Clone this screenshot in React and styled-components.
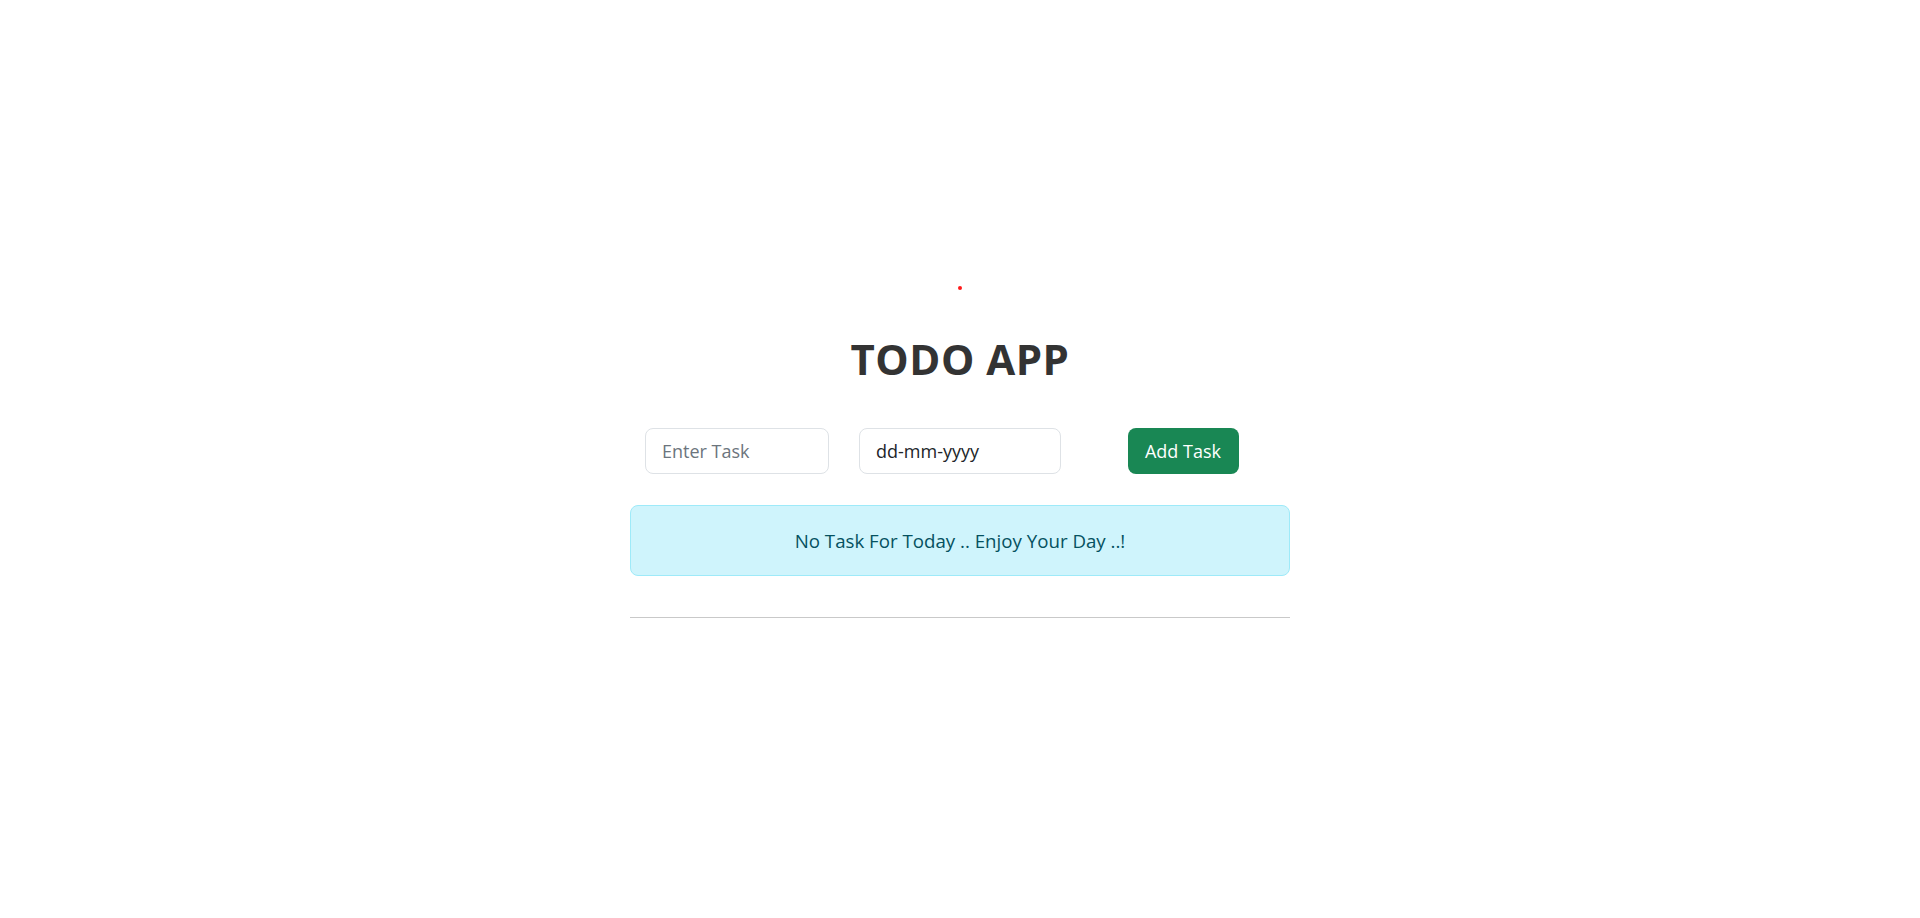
import { useState } from "react";
import styled, { createGlobalStyle } from "styled-components";

const GlobalStyles = createGlobalStyle`
    * {
        box-sizing: border-box;
    }
    body {
        margin: 0;
        background: #ffffff;
        font-family: "Open Sans", "Noto Sans", sans-serif;
        color: #212529;
    }
`;

const App = () => {
    const [task, setTask] = useState("");
    const [date, setDate] = useState("");
    const [todos] = useState([]);

    return (
        <Page>
            <GlobalStyles/>
            <Dot/>
            <Title>TODO APP</Title>
            <Container>
                <InputRow>
                    <Cell>
                        <Field width={184} placeholder="Enter Task" value={task} onChange={e => setTask(e.target.value)}/>
                    </Cell>
                    <Cell>
                        <Field width={202} dark placeholder="dd-mm-yyyy" value={date} onChange={e => setDate(e.target.value)}/>
                    </Cell>
                    <Cell>
                        <AddButton>Add Task</AddButton>
                    </Cell>
                </InputRow>
                {
                    todos.length === 0 &&
                    <Alert>No Task For Today .. Enjoy Your Day ..!</Alert>
                }
                <Rule/>
            </Container>
        </Page>
    );
}

const Page = styled.div`
    display: flex;
    flex-direction: column;
    align-items: center;
    padding-top: 286px;
    min-height: 100vh;
`;
const Dot = styled.div`
    width: 4px;
    height: 4px;
    border-radius: 50%;
    background: #ff1a1a;
`;
const Title = styled.h1`
    margin: 44px 0 0 0;
    font-size: 42px;
    line-height: 50px;
    font-weight: 700;
    letter-spacing: 0.5px;
    color: #333333;
`;
const Container = styled.div`
    width: 660px;
    margin-top: 44px;
    display: flex;
    flex-direction: column;
`;
const InputRow = styled.div`
    display: grid;
    grid-template-columns: repeat(3, 223px);
    justify-content: center;
    margin: 0 -4.5px;
`;
const Cell = styled.div`
    display: flex;
    justify-content: center;
`;
const Field = styled.input`
    width: ${p => p.width}px;
    height: 46px;
    padding: 0 16px;
    border: 1px solid #dee2e6;
    border-radius: 8px;
    font-family: inherit;
    font-size: 18px;
    color: #212529;
    outline: none;
    &::placeholder {
        color: ${p => p.dark ? "#212529" : "#6c757d"};
    }
`;
const AddButton = styled.button`
    width: 111px;
    height: 46px;
    border: none;
    border-radius: 8px;
    background: #198754;
    color: #ffffff;
    font-family: inherit;
    font-size: 18px;
    cursor: pointer;
`;
const Alert = styled.div`
    margin-top: 31px;
    height: 71px;
    display: flex;
    align-items: center;
    justify-content: center;
    background: #cff4fc;
    border: 1px solid #9eeaf9;
    border-radius: 8px;
    color: #055160;
    font-size: 18.7px;
`;
const Rule = styled.hr`
    margin: 41px 0 0 0;
    border: none;
    border-top: 1px solid #c9c9c9;
`;

export default App;
